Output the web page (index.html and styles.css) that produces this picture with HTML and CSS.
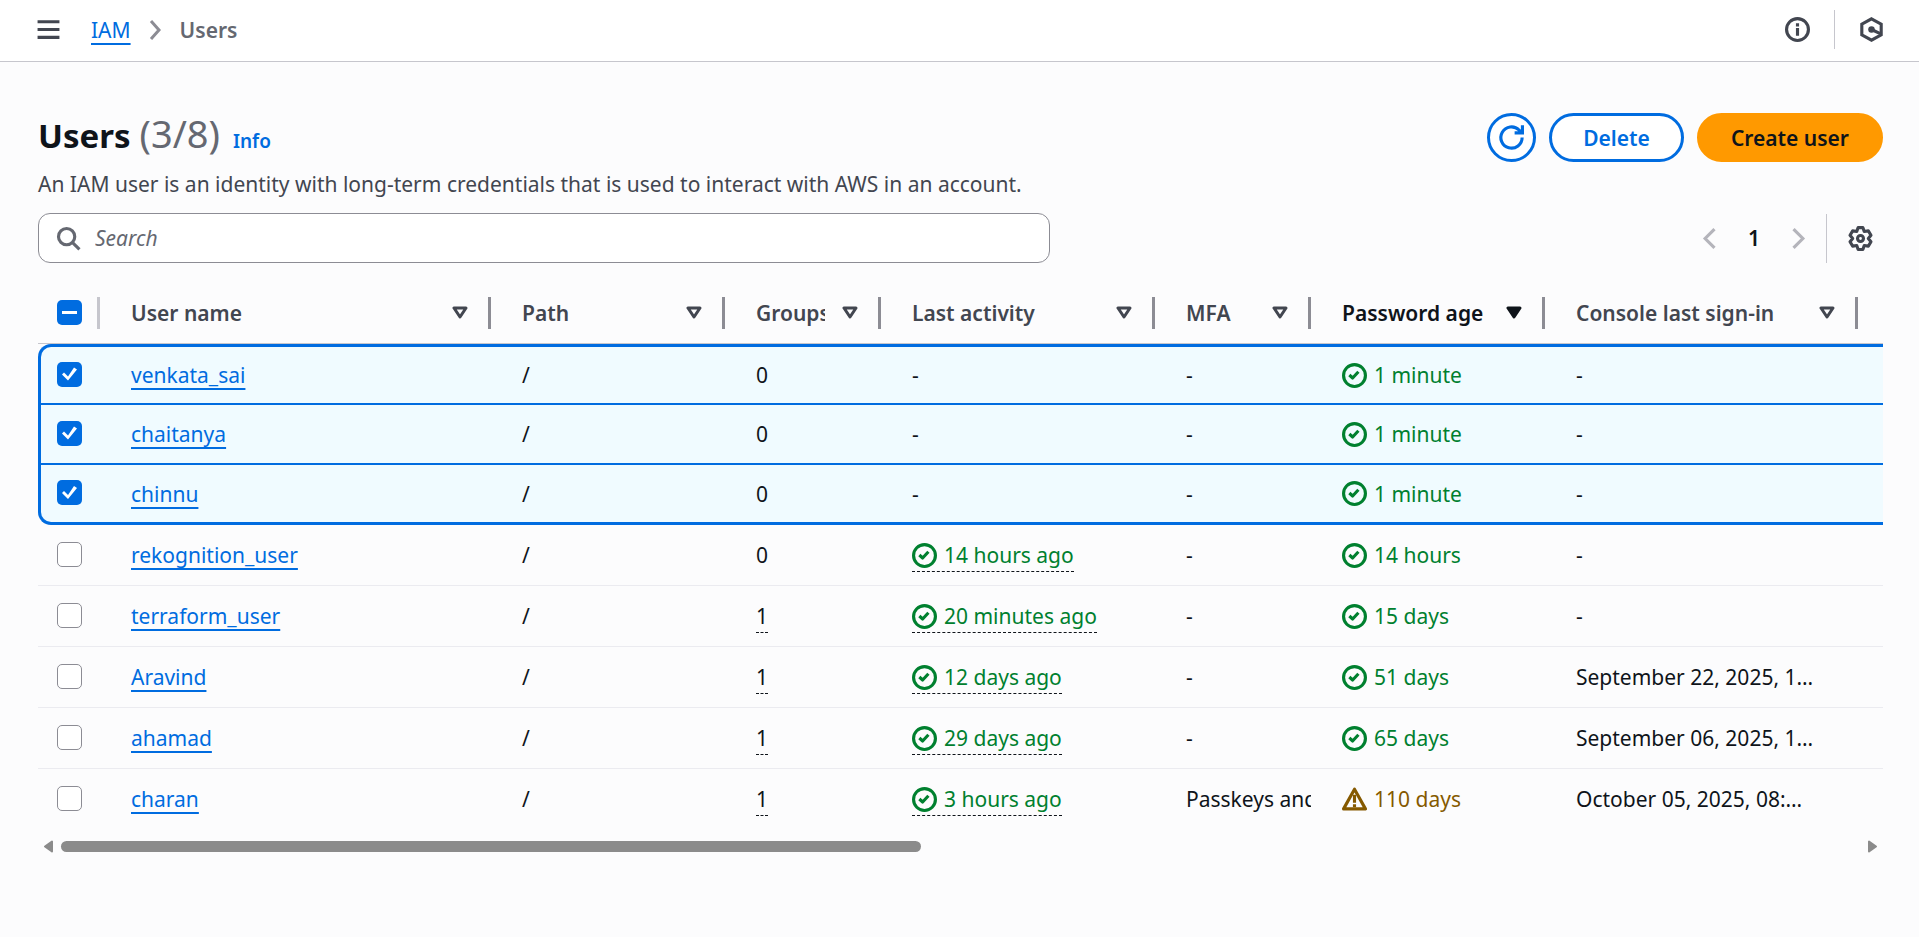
FILE: index.html
```html
<!DOCTYPE html>
<html lang="en">
<head>
<meta charset="utf-8">
<meta name="viewport" content="width=device-width, initial-scale=1">
<title>Users | IAM</title>
<link rel="stylesheet" href="styles.css">
</head>
<body>
<svg class="sprite" aria-hidden="true">
  <symbol id="ok" viewBox="0 0 16 16"><circle cx="8" cy="8" r="7"/><path d="m4.7 7.7 2.1 1.9 3.7-4"/></symbol>
  <symbol id="warn" viewBox="0 0 16 16"><path d="M8 1.4 15 14H1Z"/><path class="fill" d="M7 5h2v5H7zM7 11h2v2H7z"/></symbol>
  <symbol id="sort" viewBox="0 0 16 13"><path d="M2 2h12L8 11Z"/></symbol>
</svg>

<header class="topbar">
  <button class="icon-btn" type="button" aria-label="Open navigation"><svg class="icon" viewBox="0 0 16 16"><path d="M1 3h14M1 8h14M1 13h14"/></svg></button>
  <nav class="crumbs" aria-label="Breadcrumbs">
    <a class="link" href="#iam">IAM</a>
    <svg class="crumb-sep" viewBox="0 0 13 22"><path d="m2 2 8 9-8 9"/></svg>
    <span class="crumb-current">Users</span>
  </nav>
  <div class="topbar-tools">
    <button class="icon-btn" type="button" aria-label="Info panel"><svg class="icon" viewBox="0 0 16 16"><circle cx="8" cy="8" r="7"/><path class="fill" d="M7 4h2v2H7zM7 7h2v5H7z"/></svg></button>
    <span class="rule rule-top"></span>
    <button class="icon-btn" type="button" aria-label="Assistant"><svg class="icon" viewBox="0 0 16 16"><path d="M8 1.2 14.2 4.6v6.8L8 14.8 1.8 11.4V4.6Z"/><circle class="fill" cx="8" cy="8" r="2.1"/><path d="m8 8 5.6 2.6"/></svg></button>
  </div>
</header>

<main class="page">
  <div class="heading">
    <div>
      <h1 class="title"><span class="title-name">Users</span> <span class="title-count">(3/8)</span> <a class="info" href="#info">Info</a></h1>
      <p class="desc">An IAM user is an identity with long-term credentials that is used to interact with AWS in an account.</p>
    </div>
    <div class="actions">
      <button class="btn btn-round" type="button" aria-label="Refresh"><svg class="icon" viewBox="0 0 16 16"><path d="M14.8 8a6.8 6.8 0 1 1-2-4.8L14.6 5M15 .2V5h-5"/></svg></button>
      <button class="btn" type="button">Delete</button>
      <button class="btn btn-primary" type="button">Create user</button>
    </div>
  </div>

  <div class="toolbar">
    <label class="search">
      <svg class="icon" viewBox="0 0 16 16"><circle cx="6.8" cy="6.8" r="5.2"/><path d="m10.6 10.6 4.4 4.4"/></svg>
      <input class="search-input" type="search" placeholder="Search" aria-label="Search users">
    </label>
    <div class="pager">
      <button class="icon-btn muted" type="button" aria-label="Previous page"><svg class="icon" viewBox="0 0 16 16"><path d="m11.2 2-6 6 6 6"/></svg></button>
      <button class="icon-btn page-no" type="button">1</button>
      <button class="icon-btn muted" type="button" aria-label="Next page"><svg class="icon" viewBox="0 0 16 16"><path d="m4.8 2 6 6-6 6"/></svg></button>
    </div>
    <span class="rule rule-tool"></span>
    <button class="icon-btn gear" type="button" aria-label="Preferences"><svg class="icon" viewBox="0 0 16 16"><path d="M6.5 1H9.5L10.4 3.5 13 3.1 14.7 5.9 13 8 14.7 10.1 13 12.9 10.4 12.5 9.5 15H6.5L5.6 12.5 3 12.9 1.3 10.1 3 8 1.3 5.9 3 3.1 5.6 3.5Z"/><circle cx="8" cy="8" r="1.9"/></svg></button>
  </div>

  <div class="table-scroll">
    <table class="table">
      <colgroup><col class="c-check"><col class="c-name"><col class="c-path"><col class="c-small"><col class="c-activity"><col class="c-small"><col class="c-age"><col class="c-signin"><col class="c-rest"></colgroup>
      <thead>
        <tr>
          <th class="check"><div class="th"><input class="box box-some" type="checkbox" aria-label="Select all users"><span class="divider divider-light"></span></div></th>
          <th><div class="th"><button class="sort" type="button"><span class="sort-label">User name</span><svg class="caret"><use href="#sort"/></svg></button><span class="divider"></span></div></th>
          <th><div class="th"><button class="sort" type="button"><span class="sort-label">Path</span><svg class="caret"><use href="#sort"/></svg></button><span class="divider"></span></div></th>
          <th><div class="th"><button class="sort" type="button"><span class="sort-label">Groups</span><svg class="caret"><use href="#sort"/></svg></button><span class="divider"></span></div></th>
          <th><div class="th"><button class="sort" type="button"><span class="sort-label">Last activity</span><svg class="caret"><use href="#sort"/></svg></button><span class="divider"></span></div></th>
          <th><div class="th"><button class="sort" type="button"><span class="sort-label">MFA</span><svg class="caret"><use href="#sort"/></svg></button><span class="divider"></span></div></th>
          <th aria-sort="descending"><div class="th"><button class="sort sorted" type="button"><span class="sort-label">Password age</span><svg class="caret"><use href="#sort"/></svg></button><span class="divider"></span></div></th>
          <th><div class="th"><button class="sort" type="button"><span class="sort-label">Console last sign-in</span><svg class="caret"><use href="#sort"/></svg></button><span class="divider"></span></div></th>
          <th></th>
        </tr>
      </thead>
      <tbody>
        <tr class="selected first">
          <td class="check"><input class="box" type="checkbox" checked aria-label="Select venkata_sai"></td>
          <td><a class="link" href="#venkata_sai">venkata_sai</a></td><td>/</td><td>0</td><td>-</td><td>-</td>
          <td><span class="status"><svg class="icon"><use href="#ok"/></svg>1 minute</span></td><td>-</td><td></td>
        </tr>
        <tr class="selected">
          <td class="check"><input class="box" type="checkbox" checked aria-label="Select chaitanya"></td>
          <td><a class="link" href="#chaitanya">chaitanya</a></td><td>/</td><td>0</td><td>-</td><td>-</td>
          <td><span class="status"><svg class="icon"><use href="#ok"/></svg>1 minute</span></td><td>-</td><td></td>
        </tr>
        <tr class="selected last">
          <td class="check"><input class="box" type="checkbox" checked aria-label="Select chinnu"></td>
          <td><a class="link" href="#chinnu">chinnu</a></td><td>/</td><td>0</td><td>-</td><td>-</td>
          <td><span class="status"><svg class="icon"><use href="#ok"/></svg>1 minute</span></td><td>-</td><td></td>
        </tr>
        <tr>
          <td class="check"><input class="box" type="checkbox" aria-label="Select rekognition_user"></td>
          <td><a class="link" href="#rekognition_user">rekognition_user</a></td><td>/</td><td>0</td>
          <td><span class="hint status"><svg class="icon"><use href="#ok"/></svg>14 hours ago</span></td><td>-</td>
          <td><span class="status"><svg class="icon"><use href="#ok"/></svg>14 hours</span></td><td>-</td><td></td>
        </tr>
        <tr>
          <td class="check"><input class="box" type="checkbox" aria-label="Select terraform_user"></td>
          <td><a class="link" href="#terraform_user">terraform_user</a></td><td>/</td><td><span class="hint">1</span></td>
          <td><span class="hint status"><svg class="icon"><use href="#ok"/></svg>20 minutes ago</span></td><td>-</td>
          <td><span class="status"><svg class="icon"><use href="#ok"/></svg>15 days</span></td><td>-</td><td></td>
        </tr>
        <tr>
          <td class="check"><input class="box" type="checkbox" aria-label="Select Aravind"></td>
          <td><a class="link" href="#aravind">Aravind</a></td><td>/</td><td><span class="hint">1</span></td>
          <td><span class="hint status"><svg class="icon"><use href="#ok"/></svg>12 days ago</span></td><td>-</td>
          <td><span class="status"><svg class="icon"><use href="#ok"/></svg>51 days</span></td><td>September 22, 2025, 1…</td><td></td>
        </tr>
        <tr>
          <td class="check"><input class="box" type="checkbox" aria-label="Select ahamad"></td>
          <td><a class="link" href="#ahamad">ahamad</a></td><td>/</td><td><span class="hint">1</span></td>
          <td><span class="hint status"><svg class="icon"><use href="#ok"/></svg>29 days ago</span></td><td>-</td>
          <td><span class="status"><svg class="icon"><use href="#ok"/></svg>65 days</span></td><td>September 06, 2025, 1…</td><td></td>
        </tr>
        <tr>
          <td class="check"><input class="box" type="checkbox" aria-label="Select charan"></td>
          <td><a class="link" href="#charan">charan</a></td><td>/</td><td><span class="hint">1</span></td>
          <td><span class="hint status"><svg class="icon"><use href="#ok"/></svg>3 hours ago</span></td><td><div class="clip">Passkeys and</div></td>
          <td><span class="status status-warn"><svg class="icon"><use href="#warn"/></svg>110 days</span></td><td>October 05, 2025, 08:…</td><td></td>
        </tr>
      </tbody>
    </table>
  </div>
  <div class="scrollbar" aria-hidden="true">
    <svg class="arrow" viewBox="0 0 9 12"><path d="M8 1v10L1 6Z"/></svg>
    <div class="track"><div class="thumb"></div></div>
    <svg class="arrow" viewBox="0 0 9 12"><path d="M1 1v10l7-5Z"/></svg>
  </div>
</main>
</body>
</html>
```
FILE: styles.css
```css
:root {
  --blue: #006ce0;
  --ink: #0f141a;
  --slate: #424650;
  --grey: #656871;
  --line: #c6c6cd;
  --green: #00802f;
}

* { box-sizing: border-box; }

body {
  margin: 0;
  background: #fcfcfd;
  color: var(--ink);
  font: 400 21px/28px "Noto Sans", "Open Sans", sans-serif;
}

button, input { font: inherit; color: inherit; margin: 0; }

button {
  border: 0;
  padding: 0;
  background: none;
  cursor: pointer;
}

.sprite { display: none; }

.icon {
  display: block;
  flex: none;
  width: 25px;
  height: 25px;
  fill: none;
  stroke: currentColor;
  stroke-width: 2;
  overflow: visible;
}

.fill { fill: currentColor; stroke: none; }

.icon-btn { display: block; flex: none; color: var(--slate); }

.link {
  color: var(--blue);
  text-decoration: underline 2px;
  text-underline-offset: 5px;
  text-decoration-skip-ink: none;
}

.rule { flex: none; width: 1px; background: var(--line); }

/* Top bar */
.topbar {
  display: flex;
  align-items: center;
  min-height: 62px;
  padding: 0 35px 2px 36px;
  background: #fff;
  border-bottom: 1px solid var(--line);
}

.crumbs { display: flex; align-items: center; margin-left: 30px; }

.crumb-sep {
  width: 13px;
  height: 22px;
  margin: 0 18px;
  fill: none;
  stroke: #8c8c94;
  stroke-width: 3;
}

.crumb-current { color: var(--grey); font-weight: 600; }

.topbar-tools { display: flex; align-items: center; gap: 24px; margin-left: auto; }

.rule-top { height: 39px; }

/* Heading */
.page { padding: 51px 36px 0 38px; }

.heading {
  display: flex;
  justify-content: space-between;
  align-items: flex-start;
  gap: 24px;
}

.title {
  display: flex;
  align-items: baseline;
  margin: 0 0 16px;
  font-size: 38px;
  line-height: 40px;
  font-weight: 400;
}

.title-name { font-size: 33px; font-weight: 700; line-height: 36px; }
.title-count { margin-left: 9px; color: var(--grey); }

.info {
  margin-left: 13px;
  color: var(--blue);
  font-size: 19px;
  line-height: 24px;
  font-weight: 600;
  text-decoration: none;
}

.desc { margin: 0; color: var(--slate); }

.actions { display: flex; flex: none; gap: 13px; }

.btn {
  height: 49px;
  padding: 0 31px;
  border: 3px solid var(--blue);
  border-radius: 25px;
  background: #fff;
  color: var(--blue);
  font-weight: 600;
}

.btn-round { width: 49px; padding: 0 9px; }

.btn-primary {
  border-color: #f90;
  background: #f90;
  color: var(--ink);
}

/* Search and paging */
.toolbar { display: flex; align-items: center; margin-top: 15px; }

.search {
  display: flex;
  align-items: center;
  flex: 1;
  max-width: 1012px;
  height: 50px;
  padding: 0 17px;
  border: 1px solid #8c8c94;
  border-radius: 12px;
  background: #fff;
  color: var(--grey);
}

.search-input {
  flex: 1;
  min-width: 0;
  margin-left: 14px;
  padding: 0;
  border: 0;
  outline: 0;
  background: none;
}

.search-input::placeholder { color: var(--grey); font-style: italic; opacity: 1; }

.pager { display: flex; align-items: center; gap: 20px; margin-left: auto; }
.muted { color: #b4b4bb; }
.page-no { width: 24px; color: var(--ink); font-weight: 600; }
.rule-tool { height: 49px; margin: 0 21px 0 15px; }
.gear { margin-right: 10px; }
.gear .icon { stroke-linejoin: round; }

/* Table */
.table-scroll { margin-top: 19px; overflow-x: auto; scrollbar-width: none; }

.table {
  width: 3857px;
  table-layout: fixed;
  border-collapse: separate;
  border-spacing: 0;
}

.c-check { width: 62px; }
.c-name { width: 391px; }
.c-path { width: 234px; }
.c-small { width: 156px; }
.c-activity { width: 274px; }
.c-age { width: 234px; }
.c-signin { width: 313px; }

.table th {
  height: 62px;
  padding: 0 0 0 31px;
  border-bottom: 1px solid var(--line);
  color: var(--slate);
  font-weight: 600;
  text-align: left;
}

.table td {
  height: 61px;
  padding: 0 0 0 31px;
  border-bottom: 1px solid #ebebf0;
  white-space: nowrap;
}

.table tr:last-child td { border-bottom-color: transparent; }

.table .check { padding-left: 19px; }
.table td.check { padding-bottom: 2px; }

.th { display: flex; align-items: center; }

.sort {
  display: flex;
  align-items: center;
  flex: 1;
  min-width: 0;
  gap: 17px;
  margin-right: 20px;
  text-align: left;
}

.sort-label { flex: 1; overflow: hidden; white-space: nowrap; }

.caret {
  flex: none;
  width: 16px;
  height: 13px;
  fill: none;
  stroke: currentColor;
  stroke-width: 3;
  stroke-linejoin: round;
}

.sorted { color: var(--ink); }
.sorted .caret { fill: currentColor; }

.divider { flex: none; width: 3px; height: 32px; background: #8c8c94; }
.divider-light { margin-left: auto; background: var(--line); }

.table .selected td {
  height: 60px;
  border-bottom: 2px solid var(--blue);
  background: #f0fbff;
}

.table .selected.first td { height: 61px; border-top: 3px solid var(--blue); }
.table .selected.last td { border-bottom-width: 3px; }
.table .selected .check { padding-left: 16px; border-left: 3px solid var(--blue); }
.table .selected.first .check { border-top-left-radius: 13px; }
.table .selected.last .check { border-bottom-left-radius: 13px; }

.box {
  display: block;
  appearance: none;
  width: 25px;
  height: 25px;
  border: 1px solid #8c8c94;
  border-radius: 5px;
  background: #fff;
}

.box:checked, .box-some { border: 0; background: var(--blue); }

.box:checked::before, .box-some::before {
  content: "";
  display: block;
  width: 25px;
  height: 25px;
  background: #fff;
}

.box:checked::before { clip-path: polygon(5px 13px, 7px 11px, 11px 15px, 17px 6px, 20px 8px, 11px 19px); }
.box-some::before { clip-path: inset(11px 5px); }

.status {
  display: inline-flex;
  align-items: center;
  gap: 7px;
  vertical-align: top;
  color: var(--green);
}

.status .icon { stroke-linejoin: round; }
.status-warn { color: #855900; }

/* The negative margin keeps the dashed line from raising the text in its row */
.hint {
  display: inline-block;
  margin-bottom: -3px;
  padding-bottom: 2px;
  border-bottom: 1px dashed var(--ink);
}

.hint.status { display: inline-flex; }

.clip { overflow: hidden; }

/* Horizontal scroll bar */
.scrollbar {
  display: flex;
  align-items: center;
  gap: 8px;
  margin-top: 10px;
  padding: 0 6px;
}

.arrow {
  flex: none;
  width: 9px;
  height: 13px;
  fill: #8b8b8b;
  stroke: #8b8b8b;
  stroke-width: 2;
  stroke-linejoin: round;
}

.track { flex: 1; }
.thumb { width: 47.8%; height: 11px; border-radius: 6px; background: #8b8b8b; }
```
